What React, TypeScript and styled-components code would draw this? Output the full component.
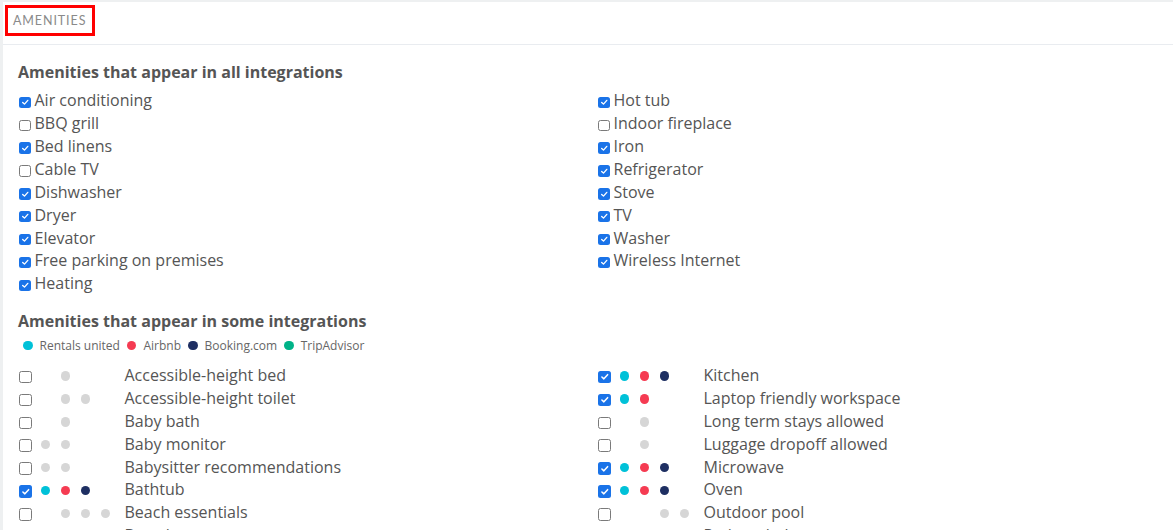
import React from 'react'
import styled, { createGlobalStyle } from 'styled-components'

const GlobalStyle = createGlobalStyle`
  html, body {
    margin: 0;
    padding: 0;
    background: #eef0f1;
    font-family: 'Open Sans', 'Liberation Sans', sans-serif;
    color: #555;
    overflow: hidden;
  }
`

const COLORS = ['#00c1d8', '#f53b52', '#1e2f62', '#00b388']
const INTEGRATIONS = ['Rentals united', 'Airbnb', 'Booking.com', 'TripAdvisor']

const CARD = styled.div`
  margin: 2px 0 0 3px;
  background: #fff;
  min-height: 528px;
`

const HEADER = styled.div`
  height: 43px;
  border-bottom: 1px solid #e9ecf0;
  display: flex;
  align-items: flex-start;
  padding: 3px 0 0 2px;
  box-sizing: border-box;
`

const HEADER_LABEL = styled.div`
  border: 3px solid #ff0000;
  height: 25px;
  padding: 0 6px 0 5px;
  display: flex;
  align-items: center;
  font-family: 'Lato', 'Liberation Sans', sans-serif;
  font-size: 12.5px;
  letter-spacing: 0.9px;
  color: #8a8a8a;
`

const BODY = styled.div`
  padding: 17px 15px 0 15px;
`

const SECTION_TITLE = styled.div<{ $spaced?: boolean }>`
  font-size: 16px;
  font-weight: 700;
  line-height: 21px;
  color: #555;
  margin-top: ${({ $spaced }) => ($spaced ? '16px' : '0')};
  margin-bottom: ${({ $spaced }) => ($spaced ? '0' : '6px')};
`

const GRID = styled.div`
  display: grid;
  grid-template-columns: 579px 1fr;
`

const COLUMN = styled.div`
  display: flex;
  flex-direction: column;
`

const ROW = styled.label`
  display: flex;
  align-items: center;
  height: 22.86px;
  font-size: 16px;
  color: #555;
  white-space: nowrap;
`

const BOX = styled.span<{ $checked: boolean; $size: number }>`
  width: ${({ $size }) => $size}px;
  height: ${({ $size }) => $size}px;
  box-sizing: border-box;
  border-radius: 2.5px;
  margin: 4px 0 0 1px;
  flex-shrink: 0;
  display: flex;
  align-items: center;
  justify-content: center;
  background: ${({ $checked }) => ($checked ? '#1a73e8' : '#fff')};
  border: ${({ $checked }) => ($checked ? 'none' : '1px solid #7a7a7a')};
`

const SIMPLE_TEXT = styled.span`
  margin-left: 4px;
`

const LEGEND = styled.div`
  display: flex;
  align-items: center;
  font-size: 12px;
  line-height: 16px;
  color: #666;
  margin: 6px 0 10px 5px;
`

const LEGEND_ITEM = styled.span`
  display: flex;
  align-items: center;
  margin-right: 7px;
`

const DOT = styled.span<{ $color: string }>`
  width: 9.5px;
  height: 9.5px;
  border-radius: 50%;
  background: ${({ $color }) => $color};
  flex-shrink: 0;
`

const LEGEND_DOT = styled(DOT)`
  margin-right: 7px;
`

const DOTS = styled.span`
  display: flex;
  align-items: center;
  width: 93px;
  padding-left: 9px;
  gap: 10.5px;
  box-sizing: border-box;
  margin-top: 2px;
`

const DOT_SLOT = styled.span`
  width: 9.5px;
  height: 9.5px;
  display: flex;
`

const Check: React.FC<{ checked: boolean; size?: number }> = ({ checked, size = 11.5 }) => (
  <BOX $checked={checked} $size={size}>
    {checked && (
      <svg width={size - 3} height={size - 3} viewBox="0 0 10 10">
        <path d="M2 5.2 L4.1 7.2 L8 2.8" fill="none" stroke="#fff" strokeWidth="1.6" strokeLinecap="round" strokeLinejoin="round" />
      </svg>
    )}
  </BOX>
)

const allLeft: [string, boolean][] = [
  ['Air conditioning', true],
  ['BBQ grill', false],
  ['Bed linens', true],
  ['Cable TV', false],
  ['Dishwasher', true],
  ['Dryer', true],
  ['Elevator', true],
  ['Free parking on premises', true],
  ['Heating', true]
]

const allRight: [string, boolean][] = [
  ['Hot tub', true],
  ['Indoor fireplace', false],
  ['Iron', true],
  ['Refrigerator', true],
  ['Stove', true],
  ['TV', true],
  ['Washer', true],
  ['Wireless Internet', true]
]

// slots: which integrations (0..3) support the amenity
const someLeft: [string, boolean, number[]][] = [
  ['Accessible-height bed', false, [1]],
  ['Accessible-height toilet', false, [1, 2]],
  ['Baby bath', false, [1]],
  ['Baby monitor', false, [0, 1]],
  ['Babysitter recommendations', false, [0, 1]],
  ['Bathtub', true, [0, 1, 2]],
  ['Beach essentials', false, [1, 2, 3]],
  ['Board games', false, [1]]
]

const someRight: [string, boolean, number[]][] = [
  ['Kitchen', true, [0, 1, 2]],
  ['Laptop friendly workspace', true, [0, 1]],
  ['Long term stays allowed', false, [1]],
  ['Luggage dropoff allowed', false, [1]],
  ['Microwave', true, [0, 1, 2]],
  ['Oven', true, [0, 1, 2]],
  ['Outdoor pool', false, [2, 3]],
  ['Patio or balcony', false, [1]]
]

const SomeRow: React.FC<{ name: string; checked: boolean; slots: number[] }> = ({ name, checked, slots }) => (
  <ROW>
    <Check checked={checked} size={12.5} />
    <DOTS>
      {[0, 1, 2, 3].map((i) => (
        <DOT_SLOT key={i}>{slots.includes(i) && <DOT $color={checked ? COLORS[i] : '#d6d6d6'} />}</DOT_SLOT>
      ))}
    </DOTS>
    <span>{name}</span>
  </ROW>
)

export default function App() {
  return (
    <>
      <GlobalStyle />
      <CARD>
        <HEADER>
          <HEADER_LABEL>AMENITIES</HEADER_LABEL>
        </HEADER>
        <BODY>
          <SECTION_TITLE>Amenities that appear in all integrations</SECTION_TITLE>
          <GRID>
            <COLUMN>
              {allLeft.map(([name, checked]) => (
                <ROW key={name}>
                  <Check checked={checked} />
                  <SIMPLE_TEXT>{name}</SIMPLE_TEXT>
                </ROW>
              ))}
            </COLUMN>
            <COLUMN>
              {allRight.map(([name, checked]) => (
                <ROW key={name}>
                  <Check checked={checked} />
                  <SIMPLE_TEXT>{name}</SIMPLE_TEXT>
                </ROW>
              ))}
            </COLUMN>
          </GRID>
          <SECTION_TITLE $spaced>Amenities that appear in some integrations</SECTION_TITLE>
          <LEGEND>
            {INTEGRATIONS.map((name, i) => (
              <LEGEND_ITEM key={name}>
                <LEGEND_DOT $color={COLORS[i]} />
                {name}
              </LEGEND_ITEM>
            ))}
          </LEGEND>
          <GRID>
            <COLUMN>
              {someLeft.map(([name, checked, slots]) => (
                <SomeRow key={name} name={name} checked={checked} slots={slots} />
              ))}
            </COLUMN>
            <COLUMN>
              {someRight.map(([name, checked, slots]) => (
                <SomeRow key={name} name={name} checked={checked} slots={slots} />
              ))}
            </COLUMN>
          </GRID>
        </BODY>
      </CARD>
    </>
  )
}
